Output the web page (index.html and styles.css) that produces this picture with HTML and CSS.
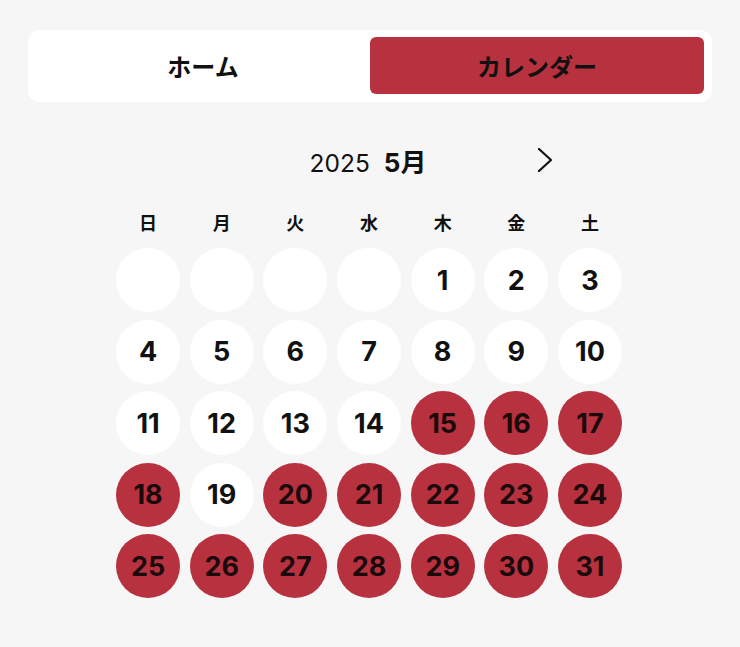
FILE: index.html
```html
<!DOCTYPE html>
<html lang="ja">
<head>
<meta charset="utf-8">
<title>カレンダー</title>
<link rel="stylesheet" href="styles.css">
</head>
<body>
<div class="page">
  <nav class="tabs">
    <div class="tab">ホーム</div>
    <div class="tab active">カレンダー</div>
  </nav>

  <header class="month-head">
    <span class="spacer"></span>
    <h1 class="title"><span class="year">2025</span><span class="month">5月</span></h1>
    <span class="next">
      <svg width="16" height="24" viewBox="0 0 16 24"><polyline points="2,1 14,12 2,23" fill="none" stroke="#111" stroke-width="2.2" stroke-linecap="round" stroke-linejoin="round"/></svg>
    </span>
  </header>

  <div class="weekdays">
    <span>日</span><span>月</span><span>火</span><span>水</span><span>木</span><span>金</span><span>土</span>
  </div>

  <div class="days">
    <div class="day"></div><div class="day"></div><div class="day"></div><div class="day"></div>
    <div class="day">1</div><div class="day">2</div><div class="day">3</div>
    <div class="day">4</div><div class="day">5</div><div class="day">6</div><div class="day">7</div>
    <div class="day">8</div><div class="day">9</div><div class="day">10</div>
    <div class="day">11</div><div class="day">12</div><div class="day">13</div><div class="day">14</div>
    <div class="day on">15</div><div class="day on">16</div><div class="day on">17</div>
    <div class="day on">18</div><div class="day">19</div><div class="day on">20</div><div class="day on">21</div>
    <div class="day on">22</div><div class="day on">23</div><div class="day on">24</div>
    <div class="day on">25</div><div class="day on">26</div><div class="day on">27</div><div class="day on">28</div>
    <div class="day on">29</div><div class="day on">30</div><div class="day on">31</div>
  </div>
</div>
</body>
</html>
```

FILE: styles.css
```css
html, body {
  margin: 0;
  padding: 0;
  background: #f6f6f6;
}
body {
  font-family: Inter, "Noto Sans CJK JP", sans-serif;
  color: #111;
}
.page {
  width: 740px;
  height: 647px;
  display: flex;
  flex-direction: column;
  align-items: center;
}
.tabs {
  margin-top: 30px;
  width: 668px;
  padding: 7px 8px 8px;
  background: #fff;
  border-radius: 12px;
  display: grid;
  grid-template-columns: 1fr 1fr;
}
.tab {
  height: 57px;
  display: flex;
  align-items: center;
  justify-content: center;
  font-family: "Noto Sans CJK JP", sans-serif;
  font-weight: 700;
  font-size: 24px;
  border-radius: 6px;
}
.tab.active {
  background: #b8313f;
}
.month-head {
  margin-top: 38px;
  width: 366px;
  height: 40px;
  display: grid;
  grid-template-columns: 1fr auto 1fr;
  align-items: center;
}
.title {
  margin: 0;
  display: flex;
  align-items: baseline;
  gap: 14px;
  font-weight: 400;
  transform: translateX(-2px);
}
.year {
  font-size: 24.5px;
}
.month {
  font-size: 26px;
  font-weight: 700;
}
.next {
  justify-self: end;
  display: flex;
}
.weekdays {
  margin-top: 30px;
  margin-right: 2px;
  height: 24px;
  display: grid;
  grid-template-columns: repeat(7, 64px);
  column-gap: 9.67px;
  font-family: "Noto Sans CJK JP", sans-serif;
  font-weight: 600;
  font-size: 18px;
  line-height: 24px;
  text-align: center;
}
.days {
  margin-top: 14px;
  margin-right: 2px;
  display: grid;
  grid-template-columns: repeat(7, 64px);
  grid-auto-rows: 64px;
  column-gap: 9.67px;
  row-gap: 7.5px;
}
.day {
  border-radius: 50%;
  background: #fff;
  display: flex;
  align-items: center;
  justify-content: center;
  font-size: 27px;
  font-weight: 700;
}
.day.on {
  background: #b8313f;
  color: #1a0a0c;
}
```
